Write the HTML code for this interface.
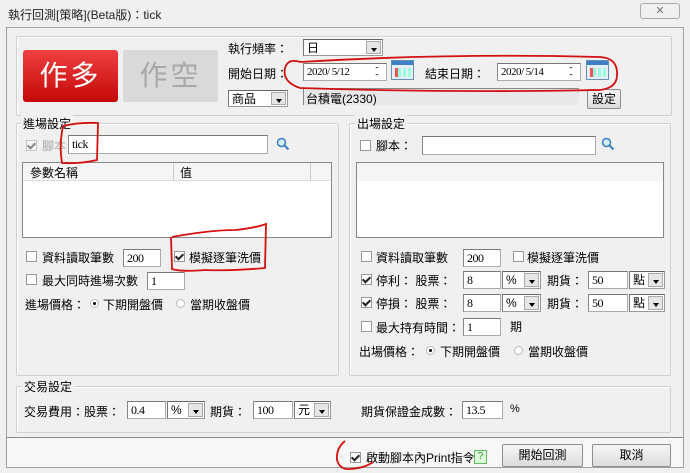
<!DOCTYPE html>
<html><head><meta charset="utf-8"><style>
*{box-sizing:border-box;margin:0;padding:0}
body{width:690px;height:473px;background:#f0f0f0;font-family:"Liberation Sans","Noto Sans CJK TC",sans-serif;font-size:12px;color:#000;position:relative;overflow:hidden}
.a{position:absolute;white-space:nowrap}
.in{position:absolute;background:#fff;border:1px solid #ababab;border-top-color:#777;border-left-color:#888;font-family:"Liberation Serif","Noto Serif CJK SC",serif;font-size:12px;padding:1px 3px;line-height:14px;letter-spacing:-0.5px}
.sel{position:absolute;background:#fff;border:1px solid #999;border-top-color:#666;border-left-color:#777;padding:1px 3px;line-height:14px}
.sel .dd{position:absolute;right:1px;top:1px;bottom:1px;width:15px;background:#e6e6e6;border:1px solid #aaa}
.sel .dd:after{content:"";position:absolute;left:4px;top:6px;border-left:3px solid transparent;border-right:3px solid transparent;border-top:4px solid #000}
.grp{position:absolute;border:1px solid #d0d0d0;border-radius:2px;box-shadow:inset 1px 1px 0 #fff}
.gl{position:absolute;background:#f0f0f0;padding:0 2px;font-size:12px}
.cb{position:absolute;width:11px;height:11px;border:1px solid #999;background:#fff}
.cb.k:after{content:"";position:absolute;left:2px;top:0px;width:3px;height:6px;border:solid #222;border-width:0 2px 2px 0;transform:rotate(45deg)}
.rd{position:absolute;width:9px;height:9px;border-radius:50%;border:1px solid #bbb;background:#fff}
.rd.on:after{content:"";position:absolute;left:2px;top:2px;width:3px;height:3px;border-radius:50%;background:#000}
.btn{position:absolute;background:linear-gradient(#f6f6f6,#dcdcdc);border:1px solid #8e8e8e;border-radius:2px;text-align:center;font-size:12px}
.spin{position:absolute;width:14px;height:15px;font-size:9px;line-height:7px;text-align:center;color:#333}
.cal{position:absolute;width:23px;height:20px;border:1px solid #6a8fb5;background:#e5eef6}
.cal:before{content:"";position:absolute;left:0;right:0;top:0;height:4px;background:#3d80c9}
.cal:after{content:"";position:absolute;left:3px;top:7px;width:14px;height:9px;background:repeating-linear-gradient(90deg,#9fd 0 3px,transparent 3px 5px);border-left:3px solid #e55}
</style></head><body>
<div class="a" style="left:8px;top:6px;font-size:12px;color:#222">執行回測[策略](Beta版)：tick</div>
<div class="a" style="left:640px;top:3px;width:40px;height:16px;border:1px solid #aaa;border-radius:3px;text-align:center;font-size:11px;color:#777;line-height:14px">✕</div>
<div class="a" style="left:6px;top:27px;width:678px;height:441px;border:1px solid #a0a0a0"></div>

<div class="grp" style="left:16px;top:36px;width:656px;height:80px"></div>
<div class="a" style="left:23px;top:50px;width:95px;height:52px;background:linear-gradient(#f04040,#c40808);border-radius:3px;color:#fff;font-size:28px;text-align:center;line-height:52px;letter-spacing:3px">作多</div>
<div class="a" style="left:123px;top:50px;width:95px;height:52px;background:#d9d9d9;color:#a8a8a8;font-size:28px;text-align:center;line-height:52px;letter-spacing:3px">作空</div>
<div class="a" style="left:228px;top:40px">執行頻率：</div>
<div class="sel" style="left:303px;top:39px;width:80px;height:17px">日<span class="dd"></span></div>
<div class="a" style="left:228px;top:65px">開始日期：</div>
<div class="in" style="left:303px;top:63px;width:84px;height:18px;font-size:11px">2020/ 5/12</div>
<div class="spin" style="left:370px;top:65px">⁃<br>⁃</div>
<div class="cal" style="left:391px;top:60px"></div>
<div class="a" style="left:425px;top:65px">結束日期：</div>
<div class="in" style="left:497px;top:63px;width:84px;height:18px;font-size:11px">2020/ 5/14</div>
<div class="spin" style="left:564px;top:65px">⁃<br>⁃</div>
<div class="cal" style="left:586px;top:60px"></div>
<div class="sel" style="left:228px;top:90px;width:60px;height:17px">商品<span class="dd"></span></div>
<div class="a" style="left:303px;top:88px;width:276px;height:17px;background:#e8e8e8;border-left:1px solid #888;border-top:1px solid #888;padding:1px 2px">台積電(2330)</div>
<div class="btn" style="left:587px;top:89px;width:34px;height:20px;line-height:18px">設定</div>

<div class="grp" style="left:16px;top:123px;width:323px;height:253px"></div>
<div class="gl" style="left:21px;top:115px">進場設定</div>
<div class="cb k" style="left:26px;top:140px;opacity:.5"></div>
<div class="a" style="left:42px;top:137px;color:#aaa">腳本</div>
<div class="in" style="left:68px;top:135px;width:200px;height:19px">tick</div>
<svg class="a" style="left:276px;top:137px" width="14" height="14"><circle cx="5.5" cy="5.5" r="4" fill="#d8ecfa" stroke="#3a7fc0" stroke-width="1.5"/><line x1="8.5" y1="8.5" x2="12.5" y2="12.5" stroke="#3a7fc0" stroke-width="2"/></svg>
<div class="a" style="left:22px;top:162px;width:310px;height:76px;background:#fff;border:1px solid #888"></div>
<div class="a" style="left:23px;top:163px;width:308px;height:18px;background:#f5f5f5;border-bottom:1px solid #ddd"></div>
<div class="a" style="left:173px;top:163px;width:1px;height:18px;background:#ccc"></div>
<div class="a" style="left:310px;top:163px;width:1px;height:18px;background:#ccc"></div>
<div class="a" style="left:30px;top:164px">參數名稱</div>
<div class="a" style="left:180px;top:164px">值</div>
<div class="cb" style="left:26px;top:251px"></div>
<div class="a" style="left:42px;top:249px">資料讀取筆數</div>
<div class="in" style="left:123px;top:249px;width:38px;height:18px">200</div>
<div class="cb k" style="left:174px;top:251px"></div>
<div class="a" style="left:189px;top:249px">模擬逐筆洗價</div>
<div class="cb" style="left:26px;top:274px"></div>
<div class="a" style="left:42px;top:272px">最大同時進場次數</div>
<div class="in" style="left:147px;top:272px;width:38px;height:18px">1</div>
<div class="a" style="left:25px;top:296px">進場價格：</div>
<div class="rd on" style="left:90px;top:299px"></div>
<div class="a" style="left:103px;top:296px">下期開盤價</div>
<div class="rd" style="left:176px;top:299px"></div>
<div class="a" style="left:190px;top:296px">當期收盤價</div>

<div class="grp" style="left:349px;top:123px;width:322px;height:253px"></div>
<div class="gl" style="left:355px;top:115px">出場設定</div>
<div class="cb" style="left:360px;top:140px"></div>
<div class="a" style="left:376px;top:137px">腳本：</div>
<div class="in" style="left:422px;top:136px;width:174px;height:19px"></div>
<svg class="a" style="left:601px;top:137px" width="14" height="14"><circle cx="5.5" cy="5.5" r="4" fill="#d8ecfa" stroke="#3a7fc0" stroke-width="1.5"/><line x1="8.5" y1="8.5" x2="12.5" y2="12.5" stroke="#3a7fc0" stroke-width="2"/></svg>
<div class="a" style="left:356px;top:162px;width:308px;height:76px;background:#fff;border:1px solid #888"></div>
<div class="a" style="left:357px;top:163px;width:306px;height:18px;background:#f5f5f5"></div>
<div class="cb" style="left:361px;top:251px"></div>
<div class="a" style="left:376px;top:249px">資料讀取筆數</div>
<div class="in" style="left:463px;top:249px;width:38px;height:18px">200</div>
<div class="cb" style="left:513px;top:251px"></div>
<div class="a" style="left:527px;top:249px">模擬逐筆洗價</div>
<div class="cb k" style="left:361px;top:274px"></div>
<div class="a" style="left:376px;top:272px">停利：&nbsp;股票：</div>
<div class="in" style="left:463px;top:271px;width:38px;height:18px">8</div>
<div class="sel" style="left:502px;top:271px;width:39px;height:18px">%<span class="dd"></span></div>
<div class="a" style="left:547px;top:272px">期貨：</div>
<div class="in" style="left:588px;top:271px;width:40px;height:18px">50</div>
<div class="sel" style="left:629px;top:271px;width:36px;height:18px">點<span class="dd"></span></div>
<div class="cb k" style="left:361px;top:297px"></div>
<div class="a" style="left:376px;top:295px">停損：&nbsp;股票：</div>
<div class="in" style="left:463px;top:294px;width:38px;height:18px">8</div>
<div class="sel" style="left:502px;top:294px;width:39px;height:18px">%<span class="dd"></span></div>
<div class="a" style="left:547px;top:295px">期貨：</div>
<div class="in" style="left:588px;top:294px;width:40px;height:18px">50</div>
<div class="sel" style="left:629px;top:294px;width:36px;height:18px">點<span class="dd"></span></div>
<div class="cb" style="left:361px;top:321px"></div>
<div class="a" style="left:376px;top:319px">最大持有時間：</div>
<div class="in" style="left:463px;top:318px;width:38px;height:18px">1</div>
<div class="a" style="left:510px;top:318px">期</div>
<div class="a" style="left:359px;top:343px">出場價格：</div>
<div class="rd on" style="left:426px;top:346px"></div>
<div class="a" style="left:440px;top:343px">下期開盤價</div>
<div class="rd" style="left:514px;top:346px"></div>
<div class="a" style="left:528px;top:343px">當期收盤價</div>

<div class="grp" style="left:16px;top:386px;width:655px;height:47px"></div>
<div class="gl" style="left:22px;top:378px">交易設定</div>
<div class="a" style="left:24px;top:403px">交易費用：股票：</div>
<div class="in" style="left:127px;top:401px;width:39px;height:18px">0.4</div>
<div class="sel" style="left:167px;top:401px;width:38px;height:18px">%<span class="dd"></span></div>
<div class="a" style="left:210px;top:403px">期貨：</div>
<div class="in" style="left:253px;top:401px;width:40px;height:18px">100</div>
<div class="sel" style="left:294px;top:401px;width:37px;height:18px">元<span class="dd"></span></div>
<div class="a" style="left:361px;top:403px">期貨保證金成數：</div>
<div class="in" style="left:462px;top:401px;width:41px;height:18px">13.5</div>
<div class="a" style="left:510px;top:403px;font-size:11px">%</div>

<div class="a" style="left:7px;top:437px;width:676px;height:1px;background:#888"></div>
<div class="a" style="left:7px;top:438px;width:676px;height:29px;background:#f7f7f7"></div>
<div class="cb k" style="left:350px;top:452px"></div>
<div class="a" style="left:366px;top:449px;font-size:12px">啟動腳本內Print指令</div>
<div class="a" style="left:474px;top:450px;width:13px;height:14px;border:1px solid #6b6;background:#dfd;color:#393;font-size:10px;text-align:center;line-height:12px">?</div>
<div class="btn" style="left:502px;top:444px;width:81px;height:23px;line-height:21px">開始回測</div>
<div class="btn" style="left:592px;top:444px;width:79px;height:23px;line-height:21px">取消</div>

<svg class="a" style="left:0;top:0" width="690" height="473">
<g fill="none" stroke="#d41010" stroke-width="1.8">
<path d="M63,126 Q80,122 98,123 L97,160 Q80,164 62,163 Q59,145 63,126"/>
<path d="M300,62 Q288,58 285,68 Q282,82 300,88 Q450,93 600,90 Q617,88 617,75 Q618,58 600,57 Q450,53 300,62"/>
<path d="M172,237 Q210,230 235,230 Q255,228 266,224 L265,268 Q230,271 205,270 Q180,272 172,269 L171,237"/>
<path d="M345,441 Q336,448 337,460 Q340,470 350,469 Q365,468 373,462"/>
</g></svg>
</body></html>
